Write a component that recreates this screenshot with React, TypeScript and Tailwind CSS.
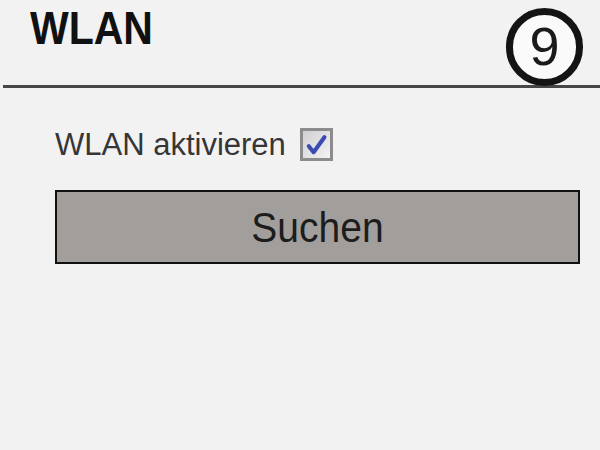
export default function App() {
  return (
    <div className="w-[600px] h-[450px] bg-[#f2f2f2] overflow-hidden font-[family-name:Liberation_Sans,Arial,sans-serif]">
      {/* header */}
      <div className="flex justify-between items-start h-[85px] pl-[30px] pr-[17px]">
        <h1 className="mt-[11px] text-[41px] leading-[40px] font-bold text-[#111] origin-bottom scale-y-112">
          WLAN
        </h1>
        <div className="mt-[8px] w-[77px] h-[78px] rounded-full border-[7px] border-[#141414] bg-[#fafafa] flex items-center justify-center">
          <span className="text-[54px] leading-none text-[#1a1a1a] -mt-[2px]">9</span>
        </div>
      </div>
      <div className="ml-[3px] h-[3px] bg-[#474747]" />

      {/* content */}
      <div className="pl-[55px] pr-[20px] pt-[40px]">
        <label className="flex items-center gap-[14px]">
          <span className="text-[31px] leading-[30px] text-[#363636]">WLAN aktivieren</span>
          <span className="w-[33px] h-[33px] border-[3px] border-[#8c8c8c] bg-gradient-to-br from-[#d0d0d4] to-[#f4f4f4] flex items-center justify-center">
            <svg viewBox="0 0 20 20" className="w-[24px] h-[24px]">
              <path d="M4 11 L8 16 L17 3.5" fill="none" stroke="#3b4bb0" strokeWidth="3.4" strokeLinecap="round" strokeLinejoin="round" />
            </svg>
          </span>
        </label>

        <button className="mt-[29px] w-[525px] h-[74px] border-2 border-[#111] bg-[#a29e9c] flex items-center justify-center">
          <span className="text-[39px] leading-none text-[#1c1c1c] scale-y-110">Suchen</span>
        </button>
      </div>
    </div>
  );
}
